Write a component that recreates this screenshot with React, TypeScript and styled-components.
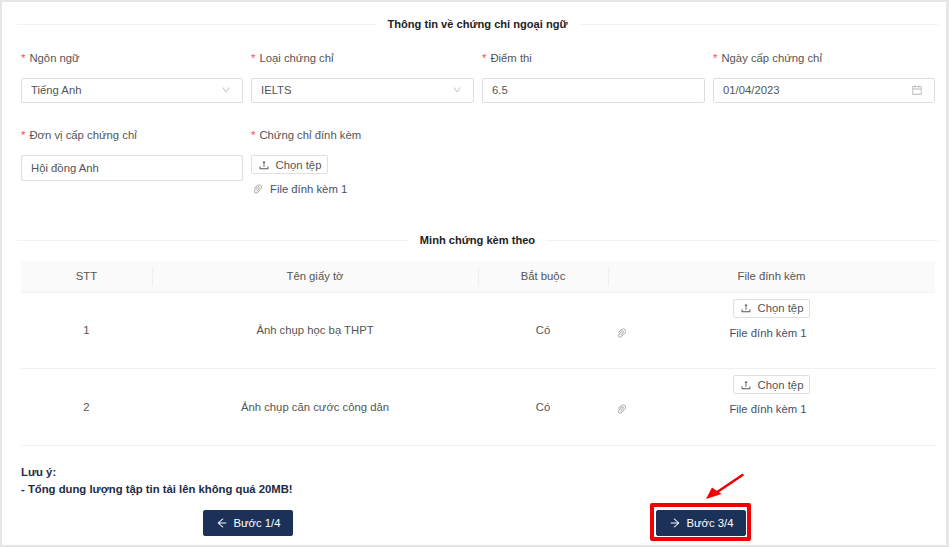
import { ReactNode } from "react";
import styled, { createGlobalStyle } from "styled-components";
import {
  AiOutlineArrowLeft,
  AiOutlineArrowRight,
  AiOutlineCalendar,
  AiOutlineDown,
  AiOutlinePaperClip,
  AiOutlineUpload,
} from "react-icons/ai";

const GlobalStyle = createGlobalStyle`
  html, body {
    margin: 0;
    padding: 0;
    background: #fff;
  }

  * {
    box-sizing: border-box;
  }
`;

const documents = [
  { id: 1, name: "Ảnh chụp học bạ THPT" },
  { id: 2, name: "Ảnh chụp căn cước công dân" },
];

function Field({ label, children }: { label: string; children: ReactNode }) {
  return (
    <FieldBox>
      <Label>{label}</Label>
      {children}
    </FieldBox>
  );
}

function UploadButton() {
  return (
    <ChooseFile>
      <AiOutlineUpload size={12} />
      Chọn tệp
    </ChooseFile>
  );
}

export default function App() {
  return (
    <Frame>
      <GlobalStyle />
      <FirstDivider>Thông tin về chứng chỉ ngoại ngữ</FirstDivider>

      <FormGrid>
        <Field label="Ngôn ngữ">
          <Input>
            Tiếng Anh
            <AiOutlineDown size={10} />
          </Input>
        </Field>
        <Field label="Loại chứng chỉ">
          <Input>
            IELTS
            <AiOutlineDown size={10} />
          </Input>
        </Field>
        <Field label="Điểm thi">
          <Input>6.5</Input>
        </Field>
        <Field label="Ngày cấp chứng chỉ">
          <Input>
            01/04/2023
            <AiOutlineCalendar size={12} />
          </Input>
        </Field>
        <Field label="Đơn vị cấp chứng chỉ">
          <Input $tall>Hội đồng Anh</Input>
        </Field>
        <Field label="Chứng chỉ đính kèm">
          <UploadColumn>
            <UploadButton />
            <AttachedFile>
              <AiOutlinePaperClip size={12} />
              File đính kèm 1
            </AttachedFile>
          </UploadColumn>
        </Field>
      </FormGrid>

      <SecondDivider>Minh chứng kèm theo</SecondDivider>

      <Table>
        <colgroup>
          <col width={131} />
          <col width={326} />
          <col width={130} />
          <col width={327} />
        </colgroup>
        <thead>
          <tr>
            <HeadCell>STT</HeadCell>
            <HeadCell>Tên giấy tờ</HeadCell>
            <HeadCell>Bắt buộc</HeadCell>
            <HeadCell>File đính kèm</HeadCell>
          </tr>
        </thead>
        <tbody>
          {documents.map((doc) => (
            <tr key={doc.id}>
              <Cell>{doc.id}</Cell>
              <Cell>{doc.name}</Cell>
              <Cell>Có</Cell>
              <FileCell>
                <FileStack>
                  <UploadButton />
                  <FileRow>
                    <AiOutlinePaperClip size={12} />
                    <FileName>File đính kèm 1</FileName>
                  </FileRow>
                </FileStack>
              </FileCell>
            </tr>
          ))}
        </tbody>
      </Table>

      <Note>
        <div>Lưu ý:</div>
        <div>- Tổng dung lượng tập tin tải lên không quá 20MB!</div>
      </Note>

      <Actions>
        <StepButton>
          <AiOutlineArrowLeft size={12} />
          Bước 1/4
        </StepButton>
        <Highlighted>
          <StepButton>
            <AiOutlineArrowRight size={12} />
            Bước 3/4
          </StepButton>
          <RedBox />
          <RedArrow width="40" height="28" viewBox="0 0 40 28">
            <path d="M37.5 2 L13 18.5" stroke="#f00000" strokeWidth="2.6" strokeLinecap="round" />
            <path d="M1 26 L7 14.5 L16.5 21 Z" fill="#f00000" />
          </RedArrow>
        </Highlighted>
      </Actions>
    </Frame>
  );
}

const Frame = styled.div`
  width: 949px;
  height: 547px;
  padding: 0 11px 0 19px;

  border-style: solid;
  border-color: #e6e6e6;
  border-width: 2px 3px 2px 2px;

  background-color: #fff;

  color: #555;

  font-family: "Liberation Sans", Arial, sans-serif;
  font-size: 11.3px;

  overflow: hidden;
`;

const Divider = styled.div`
  display: flex;
  align-items: center;

  height: 14px;
  margin-left: -4px;
  margin-right: -3px;

  color: #222;

  font-size: 11.1px;
  font-weight: 700;
  white-space: nowrap;

  &::before,
  &::after {
    content: "";
    flex: 1;
    height: 1px;
    background-color: #f2f2f2;
  }
`;

const FirstDivider = styled(Divider)`
  margin-top: 15px;
  gap: 12px;
`;

const SecondDivider = styled(Divider)`
  margin-top: 0;
  gap: 11px;
`;

const FormGrid = styled.div`
  display: grid;
  grid-template-columns: 222px 223px 223px 222px;
  grid-auto-rows: 77px;
  column-gap: 8px;
  width: 914px;
  height: 202px;
  padding-top: 17px;
`;

const FieldBox = styled.div`
  display: flex;
  flex-direction: column;
  align-items: stretch;
`;

const Label = styled.label`
  display: block;

  height: 19px;
  margin-bottom: 11px;

  line-height: 20px;

  &::before {
    content: "*";
    margin-right: 4px;
    color: #ff4d4f;
  }
`;

const Input = styled.div<{ $tall?: boolean }>`
  display: flex;
  align-items: center;
  justify-content: space-between;

  height: ${(props) => (props.$tall ? "26px" : "25px")};
  padding: 0 11px 1px 9px;

  border: 1px solid #dedede;
  border-radius: 2px;

  color: #555;

  svg {
    color: #b5b5b5;
  }
`;

const UploadColumn = styled.div`
  display: flex;
  flex-direction: column;
  align-items: flex-start;
`;

const ChooseFile = styled.button`
  display: inline-flex;
  align-items: center;
  justify-content: center;
  gap: 6px;

  width: 77px;
  height: 19px;
  padding: 0;

  border: 1px solid #e0e0e0;
  border-radius: 2px;

  background-color: #fff;

  color: #555;

  font-family: inherit;
  font-size: 11.3px;
`;

const AttachedFile = styled.div`
  display: flex;
  align-items: center;
  gap: 6px;

  margin-top: 6px;
  padding-left: 1px;

  height: 18px;

  color: #44506b;

  svg {
    color: #aaa;
  }
`;

const Table = styled.table`
  width: 914px;
  margin-top: 14px;

  border-collapse: collapse;
  table-layout: fixed;
`;

const HeadCell = styled.th`
  position: relative;

  height: 31px;
  padding: 0;

  border-bottom: 1px solid #f2f2f2;

  background-color: #fafafa;

  color: #555;

  font-weight: 400;
  text-align: center;

  & + &::before {
    content: "";
    position: absolute;
    left: 0;
    top: 6px;
    width: 1px;
    height: 19px;
    background-color: #eeeeee;
  }
`;

const Cell = styled.td`
  height: 76.5px;
  padding: 0;

  border-bottom: 1px solid #f0f0f0;

  text-align: center;
`;

const FileCell = styled(Cell)`
  vertical-align: top;
`;

const FileStack = styled.div`
  display: flex;
  flex-direction: column;
  align-items: center;

  padding-top: 6px;
`;

const FileRow = styled.div`
  display: flex;
  align-items: center;

  width: calc(100% - 8px);
  height: 18px;
  margin: 6px 0 0 8px;
  padding-right: 27px;

  svg {
    color: #aaa;
  }
`;

const FileName = styled.span`
  flex: 1;

  color: #44506b;

  text-align: center;
`;

const Note = styled.div`
  margin-top: 18px;

  color: #1d2b45;

  font-weight: 700;
  line-height: 17px;
`;

const Actions = styled.div`
  display: flex;
  gap: 363px;

  margin-top: 12px;
  padding-left: 182px;
`;

const StepButton = styled.button`
  display: flex;
  align-items: center;
  justify-content: center;
  gap: 6px;

  width: 90px;
  height: 26px;
  padding: 0;

  border: 1px solid #1b3158;
  border-radius: 2px;

  background-color: #1b3158;

  color: #fff;

  font-family: inherit;
  font-size: 11.3px;
`;

const Highlighted = styled.div`
  position: relative;
`;

const RedBox = styled.span`
  position: absolute;
  top: -7px;
  left: -6px;
  right: -5px;
  bottom: -5px;

  border: 4px solid #f00000;
  border-radius: 2px;
`;

const RedArrow = styled.svg`
  position: absolute;
  left: 49px;
  top: -37px;
`;
